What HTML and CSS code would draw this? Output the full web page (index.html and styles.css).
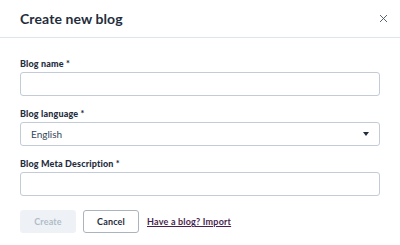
FILE: index.html
```html
<!DOCTYPE html>
<html>
<head>
<meta charset="utf-8">
<link rel="stylesheet" href="styles.css">
</head>
<body>
<div class="dialog">
  <div class="header">
    <h1 class="title">Create new blog</h1>
    <button class="close" aria-label="Close">
      <svg width="9" height="9" viewBox="0 0 9 9"><path d="M1 1L8 8M8 1L1 8" stroke="#4a5562" stroke-width="0.9" fill="none"/></svg>
    </button>
  </div>
  <div class="body">
    <div class="field">
      <label class="label">Blog name *</label>
      <div class="input"></div>
    </div>
    <div class="field">
      <label class="label">Blog language *</label>
      <div class="input select"><span class="value">English</span><span class="caret"></span></div>
    </div>
    <div class="field">
      <label class="label">Blog Meta Description *</label>
      <div class="input"></div>
    </div>
    <div class="actions">
      <button class="btn btn-disabled">Create</button>
      <button class="btn btn-secondary">Cancel</button>
      <a class="link" href="#">Have a blog? Import</a>
    </div>
  </div>
</div>
</body>
</html>
```
FILE: styles.css
```css
html, body { margin: 0; padding: 0; background: #fff; }
body { font-family: Lato, "Liberation Sans", sans-serif; color: #33475b; }
.dialog { width: 400px; height: 245px; }
.header {
  height: 38px; box-sizing: border-box; border-bottom: 1px solid #dfe3eb;
  display: flex; align-items: center; justify-content: space-between;
  padding: 0 9px 1px 20px;
}
.title { margin: 0; font-size: 14px; font-weight: 700; color: #1f2d3d; letter-spacing: 0.1px; }
.close { border: 0; background: none; padding: 0; width: 16px; height: 16px; display: flex; align-items: center; justify-content: center; }
.body { padding: 20px 20px 0 20px; display: flex; flex-direction: column; gap: 12px; }
.field { display: flex; flex-direction: column; gap: 2px; }
.label { font-size: 9px; font-weight: 900; line-height: 12px; color: #1f2d3d; letter-spacing: 0.15px; }
.input {
  height: 24px; box-sizing: border-box; border: 1px solid #c3ccd6; border-radius: 3px; background: #fff;
}
.select { display: flex; align-items: center; justify-content: space-between; padding: 0 10px 0 10px; }
.value { font-size: 10px; color: #33475b; }
.caret { width: 0; height: 0; border-left: 3.5px solid transparent; border-right: 3.5px solid transparent; border-top: 4px solid #1f2d3d; }
.actions { display: flex; align-items: center; gap: 7px; margin-top: 2px; }
.btn { height: 23px; width: 56px; box-sizing: border-box; border-radius: 3px; font-family: inherit; font-size: 9px; font-weight: 700; padding: 0; letter-spacing: 0.15px; }
.btn-disabled { background: #eef2f6; border: 1px solid #eef2f6; color: #b0bcc8; }
.btn-secondary { background: #fff; border: 1px solid #a9b4bf; color: #1f2d3d; }
.link { margin-left: 1px; font-size: 9px; font-weight: 700; color: #4a1f4d; text-decoration: underline; letter-spacing: 0.2px; }
```
